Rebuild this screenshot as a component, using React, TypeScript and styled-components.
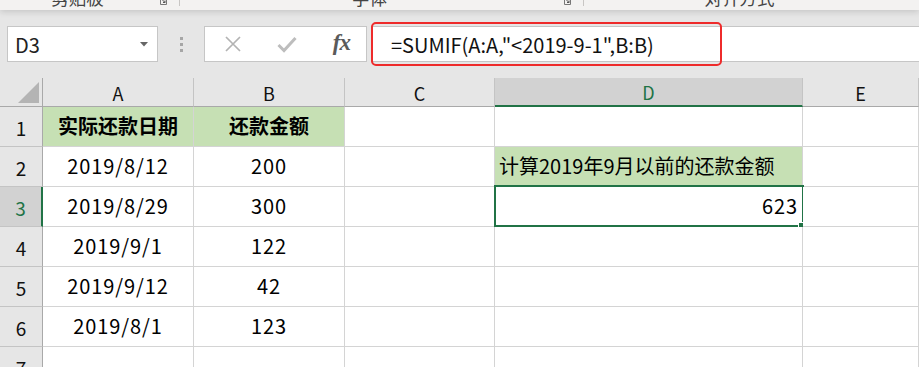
import { FC } from "react";
import styled, { createGlobalStyle, css } from "styled-components";

const GlobalStyle = createGlobalStyle`
  html, body {
    margin: 0;
    padding: 0;
    overflow: hidden;
    background: #e6e6e6;
  }
  body {
    font-family: "Noto Sans CJK SC", "Noto Sans", sans-serif;
    color: #000;
  }
`;

const GREEN = "#217346";
const FILL = "#c6e0b4";
const GRID = "#d4d4d4";

const Page = styled.div`
  width: 919px;
  height: 367px;
  overflow: hidden;
  display: flex;
  flex-direction: column;
`;

/* ---------- ribbon remnant ---------- */

const Ribbon = styled.div`
  height: 10px;
  flex: none;
  display: flex;
  background: #f3f2f1;
  overflow: hidden;
  position: relative;
  z-index: 2;
  box-shadow: 0 2px 6px rgba(0, 0, 0, 0.14);
`;

const RibbonGroup = styled.div<{ $width?: number }>`
  position: relative;
  display: flex;
  justify-content: center;
  box-sizing: border-box;
  padding-right: 24px;
  ${({ $width }) =>
    $width
      ? css`
          width: ${$width}px;
          flex: none;
          border-right: 1px solid #c8c6c4;
        `
      : css`
          flex: 1;
        `}
  height: 6px;
`;

const RibbonLabel = styled.span`
  display: block;
  font-size: 17.5px;
  line-height: 18px;
  margin-top: -11px;
  color: #444;
  white-space: nowrap;
`;

const Launcher = styled.svg`
  position: absolute;
  right: 12px;
  top: 0;
`;

/* ---------- formula bar ---------- */

const FormulaArea = styled.div`
  position: relative;
  flex: none;
  height: 68px;
  box-sizing: border-box;
  padding: 16px 0 0 7px;
  display: flex;
  align-items: flex-start;
`;

const FieldBox = styled.div`
  height: 36px;
  box-sizing: border-box;
  background: #fff;
  border: 1px solid #c6c6c6;
  display: flex;
  align-items: center;
`;

const NameBox = styled(FieldBox)`
  width: 151px;
  padding: 0 9px 0 7px;
  justify-content: space-between;
  font-size: 20px;
  color: #222;
`;

const Dots = styled.div`
  width: 46px;
  height: 36px;
  display: flex;
  flex-direction: column;
  align-items: center;
  justify-content: center;
  gap: 3px;
`;

const Dot = styled.span`
  width: 3px;
  height: 3px;
  background: #a6a6a6;
`;

const ButtonBox = styled(FieldBox)`
  width: 163px;
  padding: 0 16px 0 19px;
  justify-content: space-between;
`;

const Fx = styled.span`
  font-family: "Liberation Serif", "DejaVu Serif", serif;
  font-style: italic;
  font-weight: 700;
  font-size: 23px;
  color: #5a5a5a;
  letter-spacing: -1px;
  margin-top: -3px;
`;

const FormulaInput = styled(FieldBox)`
  flex: 1;
  margin-left: 4px;
  border-right: none;
  padding-left: 19px;
  font-size: 20px;
  color: #111;
  white-space: nowrap;
`;

const Highlight = styled.div`
  position: absolute;
  left: 371px;
  top: 12px;
  width: 351px;
  height: 44px;
  box-sizing: border-box;
  border: 2px solid #ee2b2b;
  border-radius: 5px;
  pointer-events: none;
`;

/* ---------- sheet grid ---------- */

const Sheet = styled.div`
  flex: none;
  display: grid;
  grid-template-columns: 43px 151px 151px 150px 308px 116px;
  grid-auto-rows: 40px;
  grid-template-rows: 29px;
  background: #fff;
`;

const HeaderCell = styled.div<{ $active?: boolean }>`
  box-sizing: border-box;
  background: ${({ $active }) => ($active ? "#d2d2d2" : "#e6e6e6")};
  color: ${({ $active }) => ($active ? GREEN : "#111")};
  border-right: 1px solid #c4c4c4;
  border-bottom: ${({ $active }) =>
    $active ? `2px solid ${GREEN}` : "1px solid #a9a9a9"};
  font-size: 18px;
  display: flex;
  align-items: center;
  justify-content: center;
  padding-top: 1px;
`;

const Corner = styled(HeaderCell)`
  border-right-color: #a9a9a9;
  position: relative;
`;

const CornerMark = styled.span`
  position: absolute;
  right: 3px;
  bottom: 3px;
  width: 0;
  height: 0;
  border-left: 21px solid transparent;
  border-bottom: 21px solid #b4b4b4;
`;

const RowHead = styled.div<{ $active?: boolean }>`
  box-sizing: border-box;
  background: ${({ $active }) => ($active ? "#d2d2d2" : "#e6e6e6")};
  color: ${({ $active }) => ($active ? GREEN : "#111")};
  border-right: ${({ $active }) =>
    $active ? `2px solid ${GREEN}` : "1px solid #a9a9a9"};
  border-bottom: 1px solid #c4c4c4;
  font-size: 19px;
  display: flex;
  align-items: flex-end;
  justify-content: center;
  padding-bottom: 5px;
`;

const Cell = styled.div<{
  $fill?: boolean;
  $bold?: boolean;
  $numeric?: boolean;
  $align?: "left" | "center" | "right";
}>`
  position: relative;
  box-sizing: border-box;
  border-right: 1px solid ${GRID};
  border-bottom: 1px solid ${GRID};
  background: ${({ $fill }) => ($fill ? FILL : "#fff")};
  font-size: 20px;
  font-weight: ${({ $bold }) => ($bold ? 700 : 400)};
  letter-spacing: ${({ $numeric }) => ($numeric ? "0.9px" : "0")};
  display: flex;
  align-items: flex-end;
  padding: 0 4px 6px;
  white-space: nowrap;
  justify-content: ${({ $align = "center" }) =>
    $align === "left" ? "flex-start" : $align === "right" ? "flex-end" : "center"};
`;

const Selection = styled.span`
  position: absolute;
  top: -2px;
  left: -1px;
  right: -2px;
  bottom: -1px;
  border: 2px solid ${GREEN};
  pointer-events: none;
`;

const FillHandle = styled.span`
  position: absolute;
  right: -4px;
  bottom: -4px;
  width: 7px;
  height: 7px;
  background: ${GREEN};
  border-left: 1px solid #fff;
  border-top: 1px solid #fff;
`;

type Row = {
  a?: string;
  b?: string;
  d?: string;
  header?: boolean;
};

const rows: Row[] = [
  { a: "实际还款日期", b: "还款金额", header: true },
  { a: "2019/8/12", b: "200", d: "计算2019年9月以前的还款金额" },
  { a: "2019/8/29", b: "300", d: "623" },
  { a: "2019/9/1", b: "122" },
  { a: "2019/9/12", b: "42" },
  { a: "2019/8/1", b: "123" },
  {},
];

const columns = ["A", "B", "C", "D", "E"];

const CloseIcon: FC = () => (
  <svg width="18" height="18" viewBox="0 0 18 18">
    <path d="M2 2 L16 16 M16 2 L2 16" stroke="#b3b3b3" strokeWidth="1.7" fill="none" />
  </svg>
);

const CheckIcon: FC = () => (
  <svg width="20" height="17" viewBox="0 0 20 17">
    <path d="M1.5 9 L7 14.5 L18.5 2" stroke="#bdbdbd" strokeWidth="3" fill="none" />
  </svg>
);

const Caret: FC = () => (
  <svg width="8" height="5" viewBox="0 0 8 5">
    <path d="M0 0 H8 L4 4.5 Z" fill="#666" />
  </svg>
);

const LauncherIcon: FC = () => (
  <Launcher width="7" height="5" viewBox="0 0 7 5">
    <path d="M0.5 0 V4.5 H6.5 V0" stroke="#777" strokeWidth="1" fill="none" />
    <path d="M2.5 0 L5 2.5 M3 2.5 H5 V0.5" stroke="#555" strokeWidth="1" fill="none" />
  </Launcher>
);

export default function App() {
  return (
    <Page>
      <GlobalStyle />
      <Ribbon>
        <RibbonGroup $width={180}>
          <RibbonLabel>剪贴板</RibbonLabel>
          <LauncherIcon />
        </RibbonGroup>
        <RibbonGroup $width={404}>
          <RibbonLabel>字体</RibbonLabel>
          <LauncherIcon />
        </RibbonGroup>
        <RibbonGroup>
          <RibbonLabel>对齐方式</RibbonLabel>
        </RibbonGroup>
      </Ribbon>

      <FormulaArea>
        <NameBox>
          <span>D3</span>
          <Caret />
        </NameBox>
        <Dots>
          <Dot />
          <Dot />
          <Dot />
        </Dots>
        <ButtonBox>
          <CloseIcon />
          <CheckIcon />
          <Fx>fx</Fx>
        </ButtonBox>
        <FormulaInput>=SUMIF(A:A,"&lt;2019-9-1",B:B)</FormulaInput>
        <Highlight />
      </FormulaArea>

      <Sheet>
        <Corner>
          <CornerMark />
        </Corner>
        {columns.map((c) => (
          <HeaderCell key={c} $active={c === "D"}>
            {c}
          </HeaderCell>
        ))}
        {rows.map((r, i) => {
          const n = i + 1;
          const numeric = !r.header;
          return [
            <RowHead key={`h${n}`} $active={n === 3}>
              {n}
            </RowHead>,
            <Cell key={`a${n}`} $fill={r.header} $bold={r.header} $numeric={numeric}>
              {r.a}
            </Cell>,
            <Cell key={`b${n}`} $fill={r.header} $bold={r.header} $numeric={numeric}>
              {r.b}
            </Cell>,
            <Cell key={`c${n}`} />,
            <Cell
              key={`d${n}`}
              $fill={n === 2}
              $numeric={n === 3}
              $align={n === 2 ? "left" : "right"}
            >
              {r.d}
              {n === 3 && (
                <>
                  <Selection />
                  <FillHandle />
                </>
              )}
            </Cell>,
            <Cell key={`e${n}`} />,
          ];
        })}
      </Sheet>
    </Page>
  );
}
